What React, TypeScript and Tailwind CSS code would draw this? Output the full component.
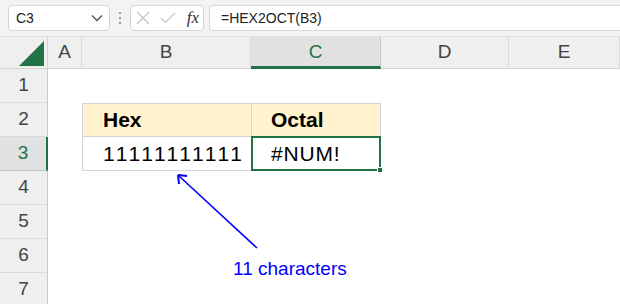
import React from "react";

const font = { fontFamily: '"Liberation Sans", Arial, sans-serif' };

export default function App() {
  const cols = ["A", "B", "C", "D", "E"];
  const rows = [1, 2, 3, 4, 5, 6, 7];
  return (
    <div className="w-[620px] h-[304px] overflow-hidden bg-white relative" style={font}>
      {/* formula bar */}
      <div className="h-[37px] bg-[#f3f3f3] flex items-center pl-[8px] gap-[0px] border-b border-[#e0e0e0]">
        <div className="w-[102px] h-[26px] bg-white border border-[#d5d5d5] rounded-[4px] flex items-center justify-between pl-[7px] pr-[6px]">
          <span className="text-[14px] text-[#222]">C3</span>
          <svg width="12" height="8" viewBox="0 0 12 8"><path d="M1 1.5 L6 6.5 L11 1.5" fill="none" stroke="#555" strokeWidth="1.4" /></svg>
        </div>
        <div className="w-[20px] flex flex-col items-center gap-[3px]">
          <div className="w-[2px] h-[2px] bg-[#999]" />
          <div className="w-[2px] h-[2px] bg-[#999]" />
          <div className="w-[2px] h-[2px] bg-[#999]" />
        </div>
        <div className="w-[74px] h-[26px] bg-white border border-[#d5d5d5] rounded-[4px] flex items-center justify-between pl-[5px] pr-[4px]">
          <svg width="14" height="14" viewBox="0 0 14 14"><path d="M1 1 L13 13 M13 1 L1 13" stroke="#c4c4c4" strokeWidth="1.2" /></svg>
          <svg width="16" height="12" viewBox="0 0 16 12"><path d="M1 6 L5.5 10.5 L15 1" fill="none" stroke="#c4c4c4" strokeWidth="1.2" /></svg>
          <span className="text-[17px] italic text-[#333]" style={{ fontFamily: '"Liberation Serif", serif' }}>fx</span>
        </div>
        <div className="ml-[5px] flex-1 h-[26px] bg-white border border-[#d5d5d5] rounded-l-[4px] border-r-0 flex items-center pl-[11px]">
          <span className="text-[14px] text-[#222]">=HEX2OCT(B3)</span>
        </div>
      </div>

      {/* grid */}
      <div className="grid grid-cols-[48px_34px_169px_130px_128px_111px] grid-rows-[32px_34px_34px_34px_34px_34px_34px_34px]">
        {/* corner */}
        <div className="bg-[#efefef] border-r border-b border-[#d4d4d4] relative">
          <svg className="absolute left-[19px] top-[4px]" width="26" height="25" viewBox="0 0 26 25"><path d="M25 0 L25 25 L0 25 Z" fill="#217346" /></svg>
        </div>
        {cols.map((c) => (
          <div
            key={c}
            className={
              c === "C"
                ? "bg-[#e1e1e1] border-r border-[#c6c6c6] border-b-[3px] border-b-[#217346] flex items-center justify-center pt-[2px] text-[19px] text-[#217346]"
                : "bg-[#efefef] border-r border-[#dadada] border-b border-b-[#d4d4d4] flex items-center justify-center text-[19px] text-[#444]"
            }
          >
            {c}
          </div>
        ))}
        {rows.map((r) => (
          <React.Fragment key={r}>
            <div
              className={
                r === 3
                  ? "bg-[#e1e1e1] border-r-[2px] border-r-[#217346] border-b border-[#c6c6c6] flex items-center justify-center text-[19px] text-[#217346]"
                  : "bg-[#efefef] border-r border-r-[#c6c6c6] border-b border-[#dadada] flex items-center justify-center text-[19px] text-[#444]"
              }
            >
              {r}
            </div>
            <div />
            {r === 2 ? (
              <>
                <div className="bg-[#fff2cc] border border-[#d4d4d4] border-r-0 flex items-center pl-[20px] text-[21px] font-bold text-black">Hex</div>
                <div className="bg-[#fff2cc] border border-[#d4d4d4] flex items-center pl-[19px] text-[21px] font-bold text-black">Octal</div>
              </>
            ) : r === 3 ? (
              <>
                <div className="border border-t-0 border-r-0 border-[#d4d4d4] flex items-center pl-[20px] text-[21px] tracking-[2.6px] text-black">11111111111</div>
                <div className="border-[2px] border-[#217346] -mt-px relative flex items-center pl-[18px] text-[21px] tracking-[0.8px] text-black">
                  #NUM!
                  <div className="absolute right-[-4px] bottom-[-4px] w-[6px] h-[6px] bg-[#217346] border border-white" />
                </div>
              </>
            ) : (
              <>
                <div />
                <div />
              </>
            )}
            <div />
            <div />
          </React.Fragment>
        ))}
      </div>

      {/* annotation */}
      <svg className="absolute left-0 top-0 pointer-events-none" width="620" height="304">
        <line x1="257" y1="248" x2="179" y2="176" stroke="#0000ff" strokeWidth="1.6" />
        <path d="M178 175 L179 184 M178 175 L187 176" stroke="#0000ff" strokeWidth="2" fill="none" />
      </svg>
      <div className="absolute left-[233px] top-[255px] text-[19px] text-[#0000ff]">11 characters</div>
    </div>
  );
}
